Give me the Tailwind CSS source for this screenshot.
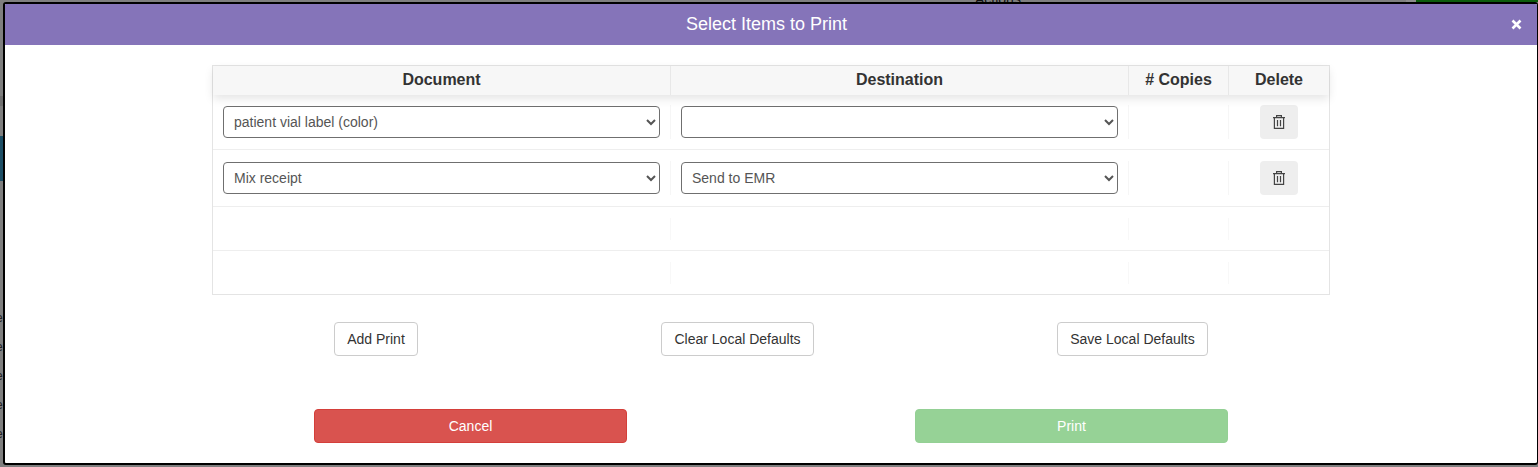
<!DOCTYPE html>
<html lang="en">
<head>
    <meta charset="UTF-8">
    <title>Select Items to Print</title>
    <script src="https://cdn.jsdelivr.net/npm/@tailwindcss/browser@4"></script>
</head>
<body class="h-[467px] overflow-hidden bg-[#7f7f7f] font-['Liberation_Sans',Arial,sans-serif]">
    <div class="relative h-[467px] overflow-hidden pt-[2px] pl-[3px]">
        <!-- bits of the page behind the modal -->
        <div class="absolute top-0 right-[122px] h-[2px] w-[10px] bg-[#8c8c8c]"></div>
        <div class="absolute top-0 right-0 h-[2px] w-[122px] bg-[#0b5c0b]"></div>
        <div class="absolute top-[136px] left-0 h-[45px] w-[3px] bg-[#1d4f66]"></div>
        <div class="absolute top-[96px] left-0 h-[10px] w-[3px] bg-[#707070]"></div>
        <div class="absolute top-[-8px] left-[975px] text-[14px] leading-[14px] text-[#111]">Actions</div>
        <div class="absolute top-[311px] left-[-4px] text-[12px] leading-[14px] text-[#222]">e</div>
        <div class="absolute top-[340px] left-[-4px] text-[12px] leading-[14px] text-[#222]">e</div>
        <div class="absolute top-[369px] left-[-4px] text-[12px] leading-[14px] text-[#222]">e</div>
        <div class="absolute top-[398px] left-[-4px] text-[12px] leading-[14px] text-[#222]">e</div>
        <div class="absolute top-[427px] left-[-4px] text-[12px] leading-[14px] text-[#222]">e</div>

        <div class="relative flex h-[463px] flex-col overflow-hidden rounded-[3px] border-t-2 border-b-2 border-l-2 border-r border-black bg-white">
            <header class="relative flex h-[41px] shrink-0 items-center justify-center bg-[#8574b9] pr-[9px]">
                <h1 class="text-[18px] text-white">Select Items to Print</h1>
                <svg class="absolute top-[15px] right-[15px]" width="11" height="11" viewBox="0 0 11 11">
                    <path d="M1.5 1.5l8 8M9.5 1.5l-8 8" stroke="#fff" stroke-width="2.6"/>
                </svg>
            </header>

            <div class="ml-[207px] mt-[20px] w-[1118px] border border-[#e4e4e4]">
                <div class="relative z-10 grid h-[29px] grid-cols-[458px_458px_100px_1fr] bg-[#f7f7f7] text-center text-[16px] leading-[28px] font-bold text-[#333] shadow-[0_4px_10px_rgba(0,0,0,0.1)]">
                    <div class="border-r border-[#e8e8e8]">Document</div>
                    <div class="border-r border-[#e8e8e8]">Destination</div>
                    <div class="border-r border-[#e8e8e8]">&#35; Copies</div>
                    <div>Delete</div>
                </div>

                <div class="grid h-[55px] grid-cols-[458px_458px_100px_1fr] items-center border-b border-[#eeeeee]">
                    <div class="flex h-[34px] items-center border-r border-[#f6f6f6] pl-[10px]">
                        <select class="h-[32px] w-[437px] rounded-[4px] border border-[#6f6f6f] bg-white pl-[6px] text-[14px] text-[#555]">
                            <option>patient vial label (color)</option>
                        </select>
                    </div>
                    <div class="flex h-[34px] items-center border-r border-[#f6f6f6] pl-[10px]">
                        <select class="h-[32px] w-[437px] rounded-[4px] border border-[#6f6f6f] bg-white pl-[6px] text-[14px] text-[#555]">
                            <option></option>
                        </select>
                    </div>
                    <div class="h-[34px] border-r border-[#f6f6f6]"></div>
                    <div class="flex justify-center">
                        <button class="flex h-[34px] w-[38px] items-center justify-center rounded-[4px] bg-[#eeeeee]">
                            <svg width="12" height="14" viewBox="0 0 12 14" fill="none" stroke="#444" stroke-width="1.2"><path d="M0 2.6h12M3.6 2.6V.6h4.8v2M1.4 2.6v10.8h9.2V2.6M4.5 5v6.2M7.5 5v6.2"/></svg>
                        </button>
                    </div>
                </div>

                <div class="grid h-[57px] grid-cols-[458px_458px_100px_1fr] items-center border-b border-[#eeeeee]">
                    <div class="flex h-[34px] items-center border-r border-[#f6f6f6] pl-[10px]">
                        <select class="h-[32px] w-[437px] rounded-[4px] border border-[#6f6f6f] bg-white pl-[6px] text-[14px] text-[#555]">
                            <option>Mix receipt</option>
                        </select>
                    </div>
                    <div class="flex h-[34px] items-center border-r border-[#f6f6f6] pl-[10px]">
                        <select class="h-[32px] w-[437px] rounded-[4px] border border-[#6f6f6f] bg-white pl-[6px] text-[14px] text-[#555]">
                            <option>Send to EMR</option>
                        </select>
                    </div>
                    <div class="h-[34px] border-r border-[#f6f6f6]"></div>
                    <div class="flex justify-center">
                        <button class="flex h-[34px] w-[38px] items-center justify-center rounded-[4px] bg-[#eeeeee]">
                            <svg width="12" height="14" viewBox="0 0 12 14" fill="none" stroke="#444" stroke-width="1.2"><path d="M0 2.6h12M3.6 2.6V.6h4.8v2M1.4 2.6v10.8h9.2V2.6M4.5 5v6.2M7.5 5v6.2"/></svg>
                        </button>
                    </div>
                </div>

                <div class="grid h-[44px] grid-cols-[458px_458px_100px_1fr] items-center border-b border-[#eeeeee]">
                    <div class="h-[22px] border-r border-[#f8f8f8]"></div>
                    <div class="h-[22px] border-r border-[#f8f8f8]"></div>
                    <div class="h-[22px] border-r border-[#f8f8f8]"></div>
                    <div></div>
                </div>
                <div class="grid h-[43px] grid-cols-[458px_458px_100px_1fr] items-center">
                    <div class="h-[22px] border-r border-[#f8f8f8]"></div>
                    <div class="h-[22px] border-r border-[#f8f8f8]"></div>
                    <div class="h-[22px] border-r border-[#f8f8f8]"></div>
                    <div></div>
                </div>
            </div>

            <div class="mt-[27px] flex text-[14px] text-[#333]">
                <button class="ml-[329px] h-[34px] w-[84px] rounded-[4px] border border-[#cccccc] bg-white">Add Print</button>
                <button class="ml-[243px] h-[34px] w-[153px] rounded-[4px] border border-[#cccccc] bg-white">Clear Local Defaults</button>
                <button class="ml-[243px] h-[34px] w-[151px] rounded-[4px] border border-[#cccccc] bg-white">Save Local Defaults</button>
            </div>

            <div class="mt-[53px] flex text-[14px] text-white">
                <button class="ml-[309px] h-[34px] w-[313px] rounded-[4px] border border-[#d43f3a] bg-[#d9534f]">Cancel</button>
                <button class="ml-[288px] h-[34px] w-[313px] rounded-[4px] border border-[#94d095] bg-[#96d296]">Print</button>
            </div>
        </div>
    </div>
</body>
</html>
